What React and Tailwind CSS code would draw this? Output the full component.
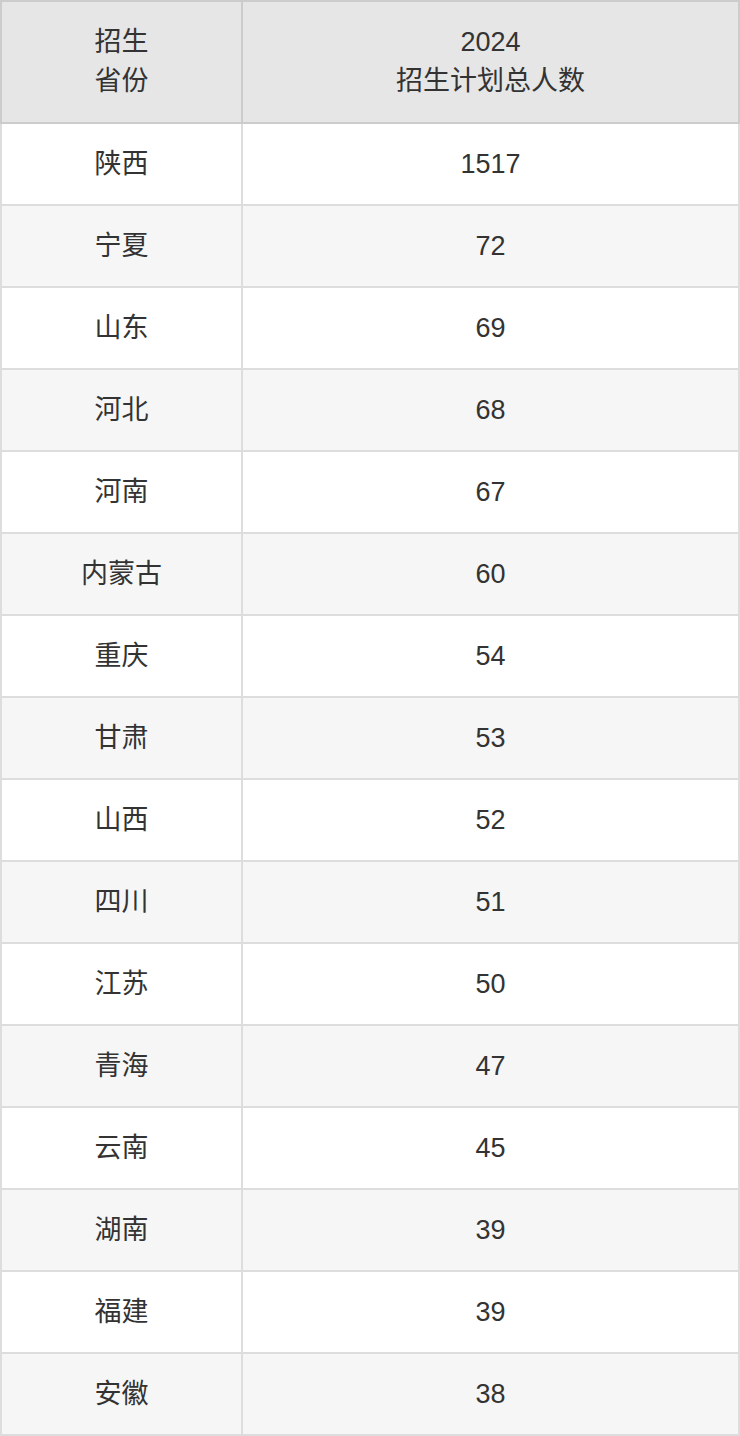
const rows = [
  ['陕西', '1517'],
  ['宁夏', '72'],
  ['山东', '69'],
  ['河北', '68'],
  ['河南', '67'],
  ['内蒙古', '60'],
  ['重庆', '54'],
  ['甘肃', '53'],
  ['山西', '52'],
  ['四川', '51'],
  ['江苏', '50'],
  ['青海', '47'],
  ['云南', '45'],
  ['湖南', '39'],
  ['福建', '39'],
  ['安徽', '38'],
]

export default function App() {
  return (
    <div className="w-[740px] bg-white text-[#333] font-['Liberation_Sans','Noto_Sans_CJK_SC',sans-serif]">
      <table className="w-[740px] border-collapse table-fixed text-[27px] leading-[39px]">
        <thead>
          <tr className="bg-[#e6e6e6]">
            <th className="w-[241px] h-[122px] border-2 border-[#ccc] font-normal text-center">
              招生
              <br />
              省份
            </th>
            <th className="border-2 border-[#ccc] font-normal text-center">
              2024
              <br />
              招生计划总人数
            </th>
          </tr>
        </thead>
        <tbody>
          {rows.map(([prov, num], i) => (
            <tr key={prov + i} className={i % 2 === 1 ? 'bg-[#f6f6f6]' : 'bg-white'}>
              <td className="h-[82px] border-2 border-[#ddd] text-center">{prov}</td>
              <td className="border-2 border-[#ddd] text-center">{num}</td>
            </tr>
          ))}
        </tbody>
      </table>
    </div>
  )
}
